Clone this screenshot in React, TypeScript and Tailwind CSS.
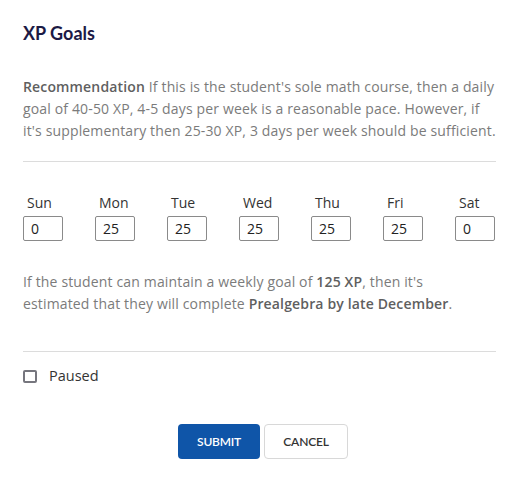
import { useState } from 'react';

const DAYS = [
    { label: 'Sun', value: '0' },
    { label: 'Mon', value: '25' },
    { label: 'Tue', value: '25' },
    { label: 'Wed', value: '25' },
    { label: 'Thu', value: '25' },
    { label: 'Fri', value: '25' },
    { label: 'Sat', value: '0' },
];

export default function App() {
    const [values, setValues] = useState(DAYS.map((d) => d.value));
    const [paused, setPaused] = useState(false);

    return (
        <div className="w-[530px] h-[482px] bg-white pl-[23px] pr-[27px] pt-[21px] font-['Open_Sans',sans-serif]">
            {/* Header */}
            <h2 className="text-[18px] leading-[24px] font-bold text-[#1c1a45] font-['Lato',sans-serif]">XP Goals</h2>

            {/* Recommendation */}
            <p className="mt-[31px] w-[473px] text-[14px] leading-[22px] tracking-[0.15px] text-[#7b7b7b]">
                <span className="font-semibold text-[#5f5f5f]">Recommendation</span> If this is the student's sole math
                course, then a daily goal of 40-50 XP, 4-5 days per week is a reasonable pace. However, if it's
                supplementary then 25-30 XP, 3 days per week should be sufficient.
            </p>

            <div className="mt-[19px] w-[473px] border-t border-[#dcdcdc]" />

            {/* Day inputs */}
            <div className="mt-[31px] flex gap-[32px]">
                {DAYS.map((d, i) => (
                    <div key={d.label} className="flex flex-col w-[40px]">
                        <span className="pl-[4px] text-[14px] leading-[20px] text-[#333]">{d.label}</span>
                        <input
                            value={values[i]}
                            onChange={(e) => {
                                const next = [...values];
                                next[i] = e.target.value;
                                setValues(next);
                            }}
                            className="mt-[3px] h-[25px] w-[40px] rounded-[2px] border border-[#8a8a8a] px-[7px] text-[14px] text-[#222] focus:outline-none"
                        />
                    </div>
                ))}
            </div>

            {/* Estimate */}
            <p className="mt-[30px] w-[460px] text-[14px] leading-[22px] tracking-[0.15px] text-[#7b7b7b]">
                If the student can maintain a weekly goal of <span className="font-semibold text-[#5f5f5f]">125 XP</span>,
                then it's estimated that they will complete{' '}
                <span className="font-semibold text-[#5f5f5f]">Prealgebra by late December</span>.
            </p>

            <div className="mt-[36px] w-[473px] border-t border-[#dcdcdc]" />

            {/* Paused */}
            <label className="mt-[14px] flex items-center h-[20px] cursor-pointer">
                <span
                    onClick={() => setPaused(!paused)}
                    className="w-[14px] h-[13px] rounded-[2px] border-2 border-[#76767e] flex items-center justify-center"
                >
                    {paused && <span className="w-[6px] h-[6px] bg-[#76767e]" />}
                </span>
                <span className="ml-[12px] text-[14.5px] text-[#333]">Paused</span>
            </label>

            {/* Actions */}
            <div className="mt-[38px] flex justify-center gap-[4px] font-['Lato',sans-serif]">
                <button className="h-[35px] w-[82px] rounded-[4px] bg-[#0f55a8] text-[12px] font-semibold text-white tracking-[-0.2px]">
                    SUBMIT
                </button>
                <button className="h-[35px] w-[84px] rounded-[4px] border border-[#d8d8d8] bg-white text-[12px] font-semibold text-[#333] tracking-[-0.2px]">
                    CANCEL
                </button>
            </div>
        </div>
    );
}
